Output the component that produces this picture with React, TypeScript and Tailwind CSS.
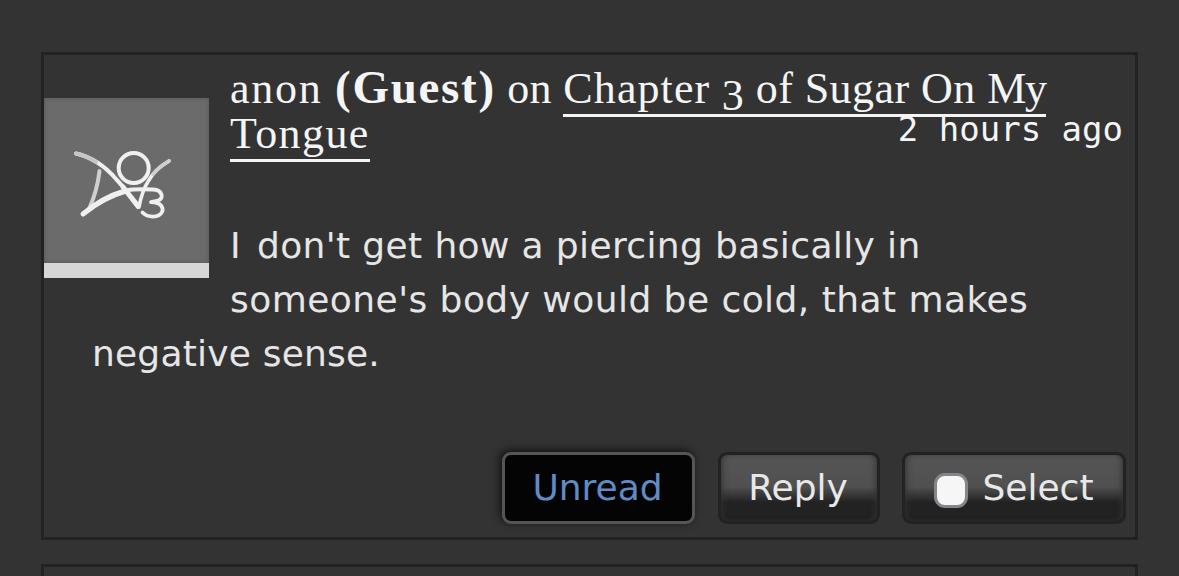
import type { ReactNode } from 'react';

const actionBase = 'flex h-[72px] items-center justify-center rounded-[9px] border-[3px] pb-[1px] text-[36px] leading-none';
const glossy = 'border-[#222] bg-linear-to-b from-[#555] from-0% via-[#505050] via-48% to-[#222] to-72% text-[#e8e8e8] shadow-[inset_4px_0_6px_-3px_#333,inset_-4px_0_6px_-3px_#333]';

function Avatar() {
  return (
    <div className="float-left mt-[34px] mr-[21px] h-[180px] w-[165px] border-b-[15px] border-[#d6d6d6] bg-[#6b6b6b] shadow-[inset_0_0_4px_#555]">
      <svg viewBox="0 0 165 165" className="block h-[165px] w-[165px]" fill="none" stroke="#f0f0f0" strokeLinecap="round" strokeLinejoin="round" aria-label="Guest icon">
        <circle cx="89.7" cy="70" r="15" strokeWidth="4" />
        <path d="M32 55.5C47 59 61 68 72 81C80 89 87 100 94 109" strokeWidth="4" />
        <path d="M32 55.5C40 57 46 60 52 64" stroke="#c6c6c6" strokeWidth="4" />
        <path d="M125 63C115 69 109 75 105 82C99 91 97 98 95 109" strokeWidth="3.6" />
        <path d="M125 63C118 67 113 71 109 76" stroke="#cfcfcf" strokeWidth="3.6" />
        <path d="M55.5 73C54 86 51 98 45 111" stroke="#cfcfcf" strokeWidth="4" />
        <path d="M39 116C51 105 64 97 80 92.5C90 91 99 91 109 91.5C119 92 120 101 114 102.5L107 104C117 104 120 110 118 114C115 120 104 120 98.5 114.5" strokeWidth="3.8" />
        <path d="M39 116C50 107 64 98 82 93" strokeWidth="5" />
        <path d="M79 89L94 108" strokeWidth="5" />
      </svg>
    </div>
  );
}

function TitleLink({ children }: { children: ReactNode }) {
  return <a href="#" className="border-b-[3px] border-[#f5f5f5] pb-px tracking-[0.45px]">{children}</a>;
}

export default function App() {
  return (
    <main className="h-[576px] overflow-hidden bg-[#333] pt-[52px] pr-[41px] pl-[41px] font-['DejaVu_Sans',sans-serif] text-[#e6e6e6]">
      <article className="flow-root h-[488px] border-[3px] border-[#222] pt-[9px]">
        <Avatar />
        <h4 className="h-[91px] font-['Liberation_Serif',serif] text-[44px] leading-[45px] font-normal text-[#f5f5f5]">
          <span className="tracking-[1.7px]">anon </span>
          <strong className="text-[47px] leading-none tracking-[1.7px]">(Guest)</strong>
          <span className="tracking-[0.4px]"> on </span>
          <TitleLink>
            <span className="tracking-[1.1px]">Chapter</span> <span className="inline-block translate-y-[7px] leading-none">3</span> of Sugar On <span className="tracking-[-1.2px]">My</span> <span className="tracking-[1.4px]">Tongue</span>
          </TitleLink>
        </h4>
        <p className="-mt-[46px] mr-[12px] ml-auto w-fit font-['DejaVu_Sans_Mono',monospace] text-[34px] leading-[40px] text-[#f5f5f5]">2 hours ago</p>
        <blockquote className="mx-12 mt-[70px] text-[36px] leading-[54px] tracking-[0.45px]">
          <span className="mr-[4px]">I</span> <span className="tracking-[0.37px]">don't get how a piercing basically in</span> someone's body would be cold, that makes <span className="tracking-[0.2px]">negative sense.</span>
        </blockquote>
        <div className="mt-[71px] flex justify-end pr-[9px]">
          <button type="button" className={`${actionBase} mr-[23px] w-[193px] border-[#555] bg-[#040404] pr-[2px] text-[#5f8cc5] shadow-[-2px_-2px_8px_#111]`}>Unread</button>
          <button type="button" className={`${actionBase} ${glossy} mr-[22px] w-[162px] pr-[2px]`}>Reply</button>
          <label className={`${actionBase} ${glossy} w-[224px] gap-[14px]`}>
            <input type="checkbox" className="mt-[6px] h-[35px] w-[34px] appearance-none rounded-[11px] border-[3px] border-[#85858c] bg-[#f6f6f6]" />
            Select
          </label>
        </div>
      </article>
      <article className="mt-6 h-[100px] border-[3px] border-[#222]" />
    </main>
  );
}
